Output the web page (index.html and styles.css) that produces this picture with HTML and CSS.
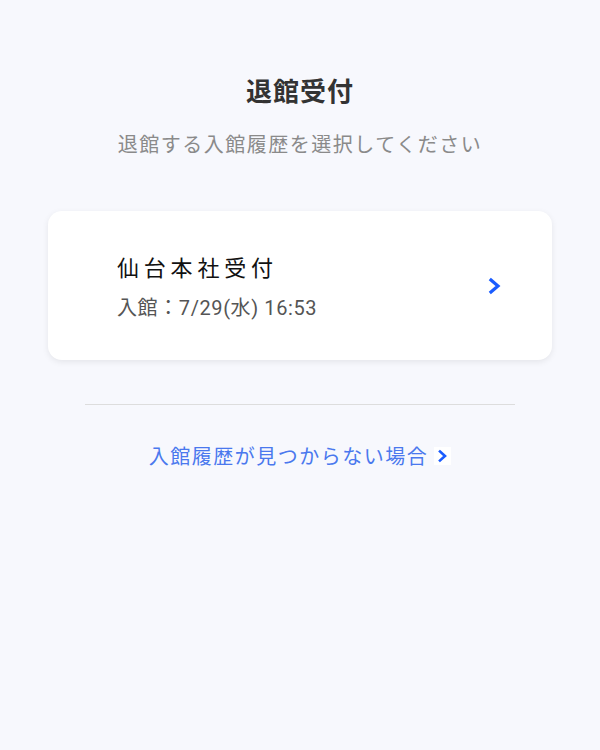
FILE: index.html
```html
<!DOCTYPE html>
<html lang="ja">
<head>
<meta charset="utf-8">
<link rel="stylesheet" href="styles.css">
</head>
<body>
<main class="page">
  <h1 class="title">退館受付</h1>
  <p class="subtitle">退館する入館履歴を選択してください</p>
  <div class="card">
    <div class="card-body">
      <div class="card-name">仙台本社受付</div>
      <div class="card-time">入館：7/29(水) 16:53</div>
    </div>
    <svg class="chev" width="14" height="18" viewBox="0 0 14 18"><path d="M3 3 L10 9 L3 15" fill="none" stroke="#1a5cff" stroke-width="3.2" stroke-linecap="square" stroke-linejoin="miter"/></svg>
  </div>
  <hr class="divider">
  <a class="link" href="#">入館履歴が見つからない場合<span class="link-chev"><svg width="12" height="14" viewBox="0 0 12 14"><path d="M3 2.5 L8 7 L3 11.5" fill="none" stroke="#1a5cff" stroke-width="2.6" stroke-linecap="square"/></svg></span></a>
</main>
</body>
</html>
```

FILE: styles.css
```css
html, body {
  margin: 0;
  padding: 0;
  background: #f7f8fd;
  font-family: "Noto Sans CJK JP", "Noto Sans", sans-serif;
}
.page {
  display: flex;
  flex-direction: column;
  align-items: center;
  padding-top: 71px;
}
.title {
  margin: 0;
  font-size: 26px;
  font-weight: 700;
  color: #333;
  line-height: 38px;
  letter-spacing: 1px;
}
.subtitle {
  margin: 20px 0 0;
  font-size: 20px;
  color: #8a8a8a;
  line-height: 30px;
  letter-spacing: 1.5px;
}
.card {
  margin-top: 52px;
  width: 504px;
  height: 149px;
  box-sizing: border-box;
  background: #fff;
  border-radius: 14px;
  box-shadow: 0 2px 6px rgba(0,0,0,0.08);
  display: flex;
  align-items: center;
  padding: 0 50px 0 69px;
}
.card-body {
  flex: 1;
  display: flex;
  flex-direction: column;
  gap: 12px;
}
.card-name {
  font-size: 22px;
  color: #111;
  letter-spacing: 4.8px;
  line-height: 32px;
}
.card-time {
  font-size: 20px;
  color: #555;
  line-height: 28px;
  letter-spacing: 0.6px;
  font-family: "Roboto", "Noto Sans CJK JP", sans-serif;
}
.chev { display: block; }
.divider {
  margin: 44px 0 0;
  width: 430px;
  border: none;
  border-top: 1px solid #ddd;
}
.link {
  margin-top: 36px;
  font-size: 20px;
  color: #4a78ee;
  text-decoration: none;
  letter-spacing: 1.5px;
  line-height: 30px;
  display: flex;
  align-items: center;
}
.link-chev {
  margin-left: 6px;
  width: 17px;
  height: 18px;
  background: #fff;
  display: flex;
  align-items: center;
  justify-content: center;
}
.link-chev svg { display: block; }
```
